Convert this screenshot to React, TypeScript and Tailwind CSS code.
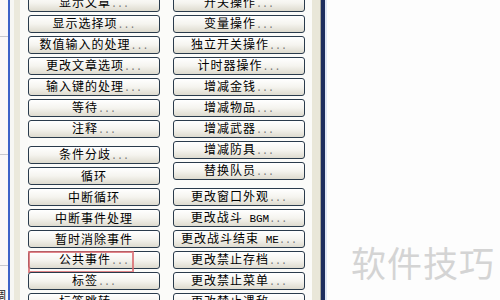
import React from 'react';

type Item = { label: string; dots?: boolean; mark?: boolean; gapBefore?: boolean };

const leftItems: Item[] = [
    { label: '显示文章', dots: true },
    { label: '显示选择项', dots: true },
    { label: '数值输入的处理', dots: true },
    { label: '更改文章选项', dots: true },
    { label: '输入键的处理', dots: true },
    { label: '等待', dots: true },
    { label: '注释', dots: true },
    { label: '条件分歧', dots: true, gapBefore: true },
    { label: '循环' },
    { label: '中断循环' },
    { label: '中断事件处理' },
    { label: '暂时消除事件' },
    { label: '公共事件', dots: true, mark: true },
    { label: '标签', dots: true },
    { label: '标签跳转', dots: true },
];

const rightItems: Item[] = [
    { label: '开关操作', dots: true },
    { label: '变量操作', dots: true },
    { label: '独立开关操作', dots: true },
    { label: '计时器操作', dots: true },
    { label: '增减金钱', dots: true },
    { label: '增减物品', dots: true },
    { label: '增减武器', dots: true },
    { label: '增减防具', dots: true },
    { label: '替换队员', dots: true },
    { label: '更改窗口外观', dots: true, gapBefore: true },
    { label: '更改战斗 BGM', dots: true },
    { label: '更改战斗结束 ME', dots: true },
    { label: '更改禁止存档', dots: true },
    { label: '更改禁止菜单', dots: true },
    { label: '更改禁止遇敌', dots: true },
];

function CmdButton({ item }: { item: Item }) {
    // latin runs use a mono face so they keep the narrow bitmap-font width
    const parts = item.label.split(/([A-Za-z ]+)/).filter(Boolean);
    return (
        <div
            className={`relative flex h-[18px] w-[132px] shrink-0 items-center justify-center rounded-[3px] border border-[#2a3b4c] bg-gradient-to-b from-white via-[#f5f4ef] to-[#dedbcf] ${item.gapBefore ? 'mt-[5px]' : ''}`}
        >
            <span className="whitespace-nowrap text-[12px] leading-none text-black">
                {parts.map((p, i) =>
                    /[A-Za-z ]/.test(p) ? (
                        <span key={i} className="font-['Liberation_Mono',monospace] text-[11px]">{p}</span>
                    ) : (
                        <span key={i} className="font-['Noto_Sans_CJK_SC',sans-serif] tracking-[1px]">{p}</span>
                    )
                )}
                {item.dots && (
                    <span className="font-['Liberation_Mono',monospace] text-[10px] text-[#777]">...</span>
                )}
            </span>
            {item.mark && (
                <div className="absolute -left-[1px] -top-[1px] h-[22px] w-[106px] border-2 border-[#d9676b]/80" />
            )}
        </div>
    );
}

function Column({ items }: { items: Item[] }) {
    return (
        <div className="flex w-[132px] flex-col gap-[3px]">
            {items.map((it) => (
                <CmdButton key={it.label} item={it} />
            ))}
        </div>
    );
}

export default function App() {
    return (
        <div className="flex h-[300px] w-[500px] overflow-hidden bg-[#fbfbf9]">
            {/* event list peeking in on the left */}
            <div className="flex w-[8px] flex-col overflow-hidden bg-[#fbf8f8]">
                <div className="h-[36px] shrink-0" />
                <div className="h-[118px] shrink-0 border-t border-[#c9c9cf]" />
                <div className="h-[111px] shrink-0 border-t border-[#c9c9cf]" />
                <div className="flex flex-1 flex-col justify-end border-t border-[#c9c9cf]">
                    <span className="-ml-[6px] font-['Noto_Sans_CJK_SC',sans-serif] text-[12px] leading-[10px] text-[#222]">调</span>
                </div>
            </div>
            <div className="w-[2px] bg-[#3d62c8]" />
            <div className="w-[4px] bg-[#f7f7f4]" />
            <div className="w-[6px] bg-[#ebe9dc]" />
            <div className="w-[8px] bg-[#fafaf8]" />

            <div className="-mt-[6px] flex gap-[13px]">
                <Column items={leftItems} />
                <Column items={rightItems} />
            </div>

            <div className="w-[7px] bg-[#fbfbf9]" />
            <div className="w-[8px] bg-[#e9e7d9]" />
            <div className="w-[1px] bg-[#a9a89c]" />
            <div className="w-[4px] bg-[#1d2d5e]" />
            <div className="w-[2px] bg-[#dfe7f6]" />

            <div className="flex flex-1 items-end justify-end bg-[#fdfdfd] pb-[21px] pr-[5px]">
                <span className="font-['Noto_Sans_CJK_SC',sans-serif] text-[35px] leading-none tracking-[1px] text-[#d4d4d4]">
                    软件技巧
                </span>
            </div>
        </div>
    );
}
